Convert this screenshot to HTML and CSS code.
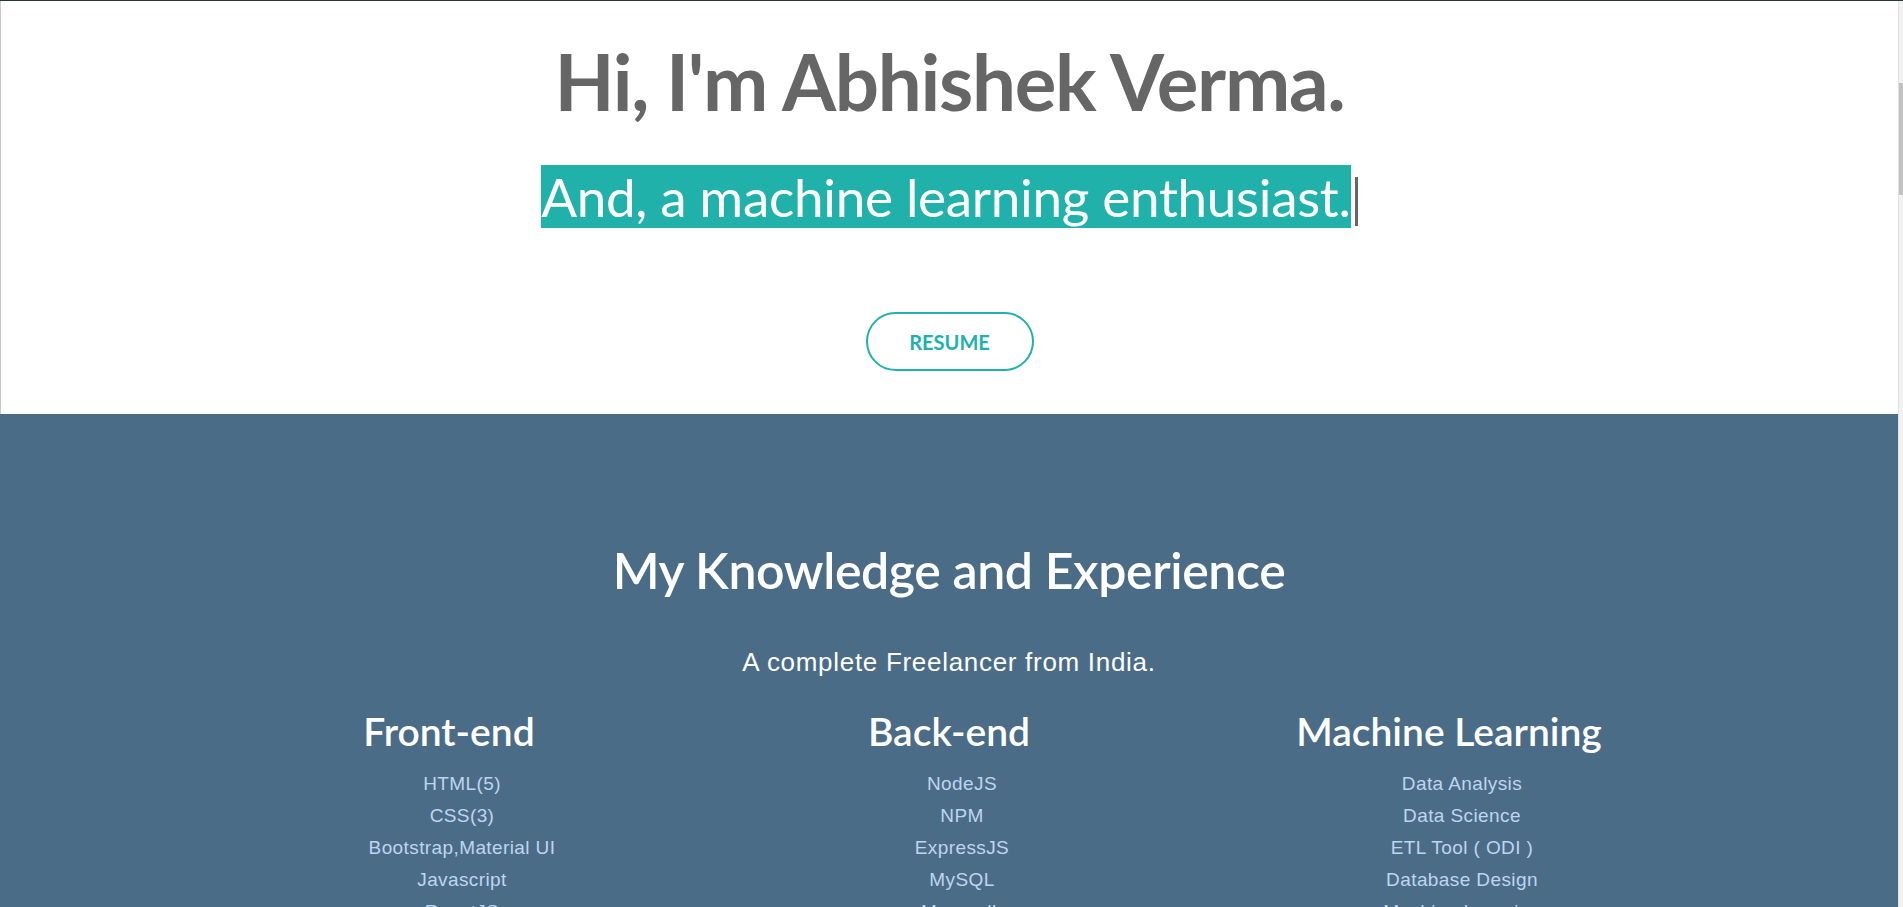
FILE: index.html
```html
<!DOCTYPE html>
<html lang="en">
<head>
<meta charset="utf-8">
<title>Abhishek Verma</title>
<link rel="stylesheet" href="styles.css">
</head>
<body>
<div class="scrollbar"><div class="thumb"></div></div>
<main class="page">
  <header class="hero">
    <h1 class="hero-title">Hi, I'm Abhishek Verma.</h1>
    <p class="tagline"><span class="typed">And, a machine learning enthusiast.</span><span class="cursor"></span></p>
    <div class="actions"><a class="btn-resume" href="#">RESUME</a></div>
  </header>
  <section class="skills">
    <h2 class="skills-title">My Knowledge and Experience</h2>
    <p class="skills-lead">A complete Freelancer from India.</p>
    <div class="columns">
      <div class="col">
        <h3 class="col-title">Front-end</h3>
        <ul class="col-list">
          <li>HTML(5)</li>
          <li>CSS(3)</li>
          <li>Bootstrap,Material UI</li>
          <li>Javascript</li>
          <li>ReactJS</li>
        </ul>
      </div>
      <div class="col">
        <h3 class="col-title">Back-end</h3>
        <ul class="col-list">
          <li>NodeJS</li>
          <li>NPM</li>
          <li>ExpressJS</li>
          <li>MySQL</li>
          <li>Mongodb</li>
        </ul>
      </div>
      <div class="col">
        <h3 class="col-title">Machine Learning</h3>
        <ul class="col-list">
          <li>Data Analysis</li>
          <li>Data Science</li>
          <li>ETL Tool ( ODI )</li>
          <li>Database Design</li>
          <li>Machine Learning</li>
        </ul>
      </div>
    </div>
  </section>
</main>
</body>
</html>
```

FILE: styles.css
```css
html, body {
  height: 100%;
  overflow: hidden;
}
body {
  margin: 0;
  border-top: 1px solid #2e3338;
  background: #ffffff;
  font-family: "Liberation Sans", Arial, sans-serif;
}
.page {
  width: calc(100% - 5px);
}
.scrollbar {
  position: fixed;
  top: 1px;
  right: 0;
  bottom: 0;
  width: 5px;
  background: #f1f1f1;
  border-left: 1px solid #e2e2e2;
  box-sizing: border-box;
}
.thumb {
  margin-top: 82px;
  height: 112px;
  background: #c1c1c1;
}
.hero {
  border-left: 1px solid #c9c9c9;
  padding: 32px 0 43px;
  text-align: center;
}
.hero-title {
  margin: 0;
  font-family: Lato, "Open Sans", sans-serif;
  font-weight: 700;
  font-size: 78px;
  line-height: 96px;
  letter-spacing: -1.3px;
  color: #666666;
}
.tagline {
  margin: 36px 0 0;
  height: 63px;
  line-height: 63px;
  font-family: Lato, "Open Sans", sans-serif;
  font-size: 53px;
  letter-spacing: -0.3px;
  color: #ffffff;
}
.typed {
  display: inline-block;
  vertical-align: top;
  height: 63px;
  background: #20b2aa;
}
.cursor {
  display: inline-block;
  vertical-align: top;
  width: 3px;
  height: 49px;
  margin: 12px 0 0 4px;
  background: #666666;
}
.actions {
  margin-top: 84px;
}
.btn-resume {
  display: inline-flex;
  align-items: center;
  justify-content: center;
  box-sizing: border-box;
  width: 168px;
  height: 59px;
  border: 2px solid #20b2aa;
  border-radius: 30px;
  font-family: Lato, "Open Sans", sans-serif;
  font-weight: 700;
  font-size: 20px;
  color: #20b2aa;
  text-decoration: none;
}
.skills {
  background: #4b6c86;
  padding-top: 125px;
  padding-bottom: 60px;
  text-align: center;
  color: #ffffff;
}
.skills-title {
  margin: 0;
  font-family: Lato, "Open Sans", sans-serif;
  font-weight: 600;
  font-size: 50px;
  line-height: 62px;
  letter-spacing: -0.4px;
}
.skills-lead {
  margin: 47px 0 0;
  font-size: 26px;
  line-height: 28px;
  letter-spacing: 0.7px;
}
.columns {
  display: grid;
  grid-template-columns: repeat(3, 500px);
  justify-content: center;
  margin-top: 31px;
}
.col-title {
  margin: 0;
  font-family: Lato, "Open Sans", sans-serif;
  font-weight: 600;
  font-size: 39px;
  line-height: 48px;
}
.col-list {
  list-style: none;
  margin: 13px 0 0;
  padding: 0 0 0 26px;
  font-size: 19px;
  line-height: 32px;
  letter-spacing: 0.4px;
  color: #bdd5f2;
}
```
